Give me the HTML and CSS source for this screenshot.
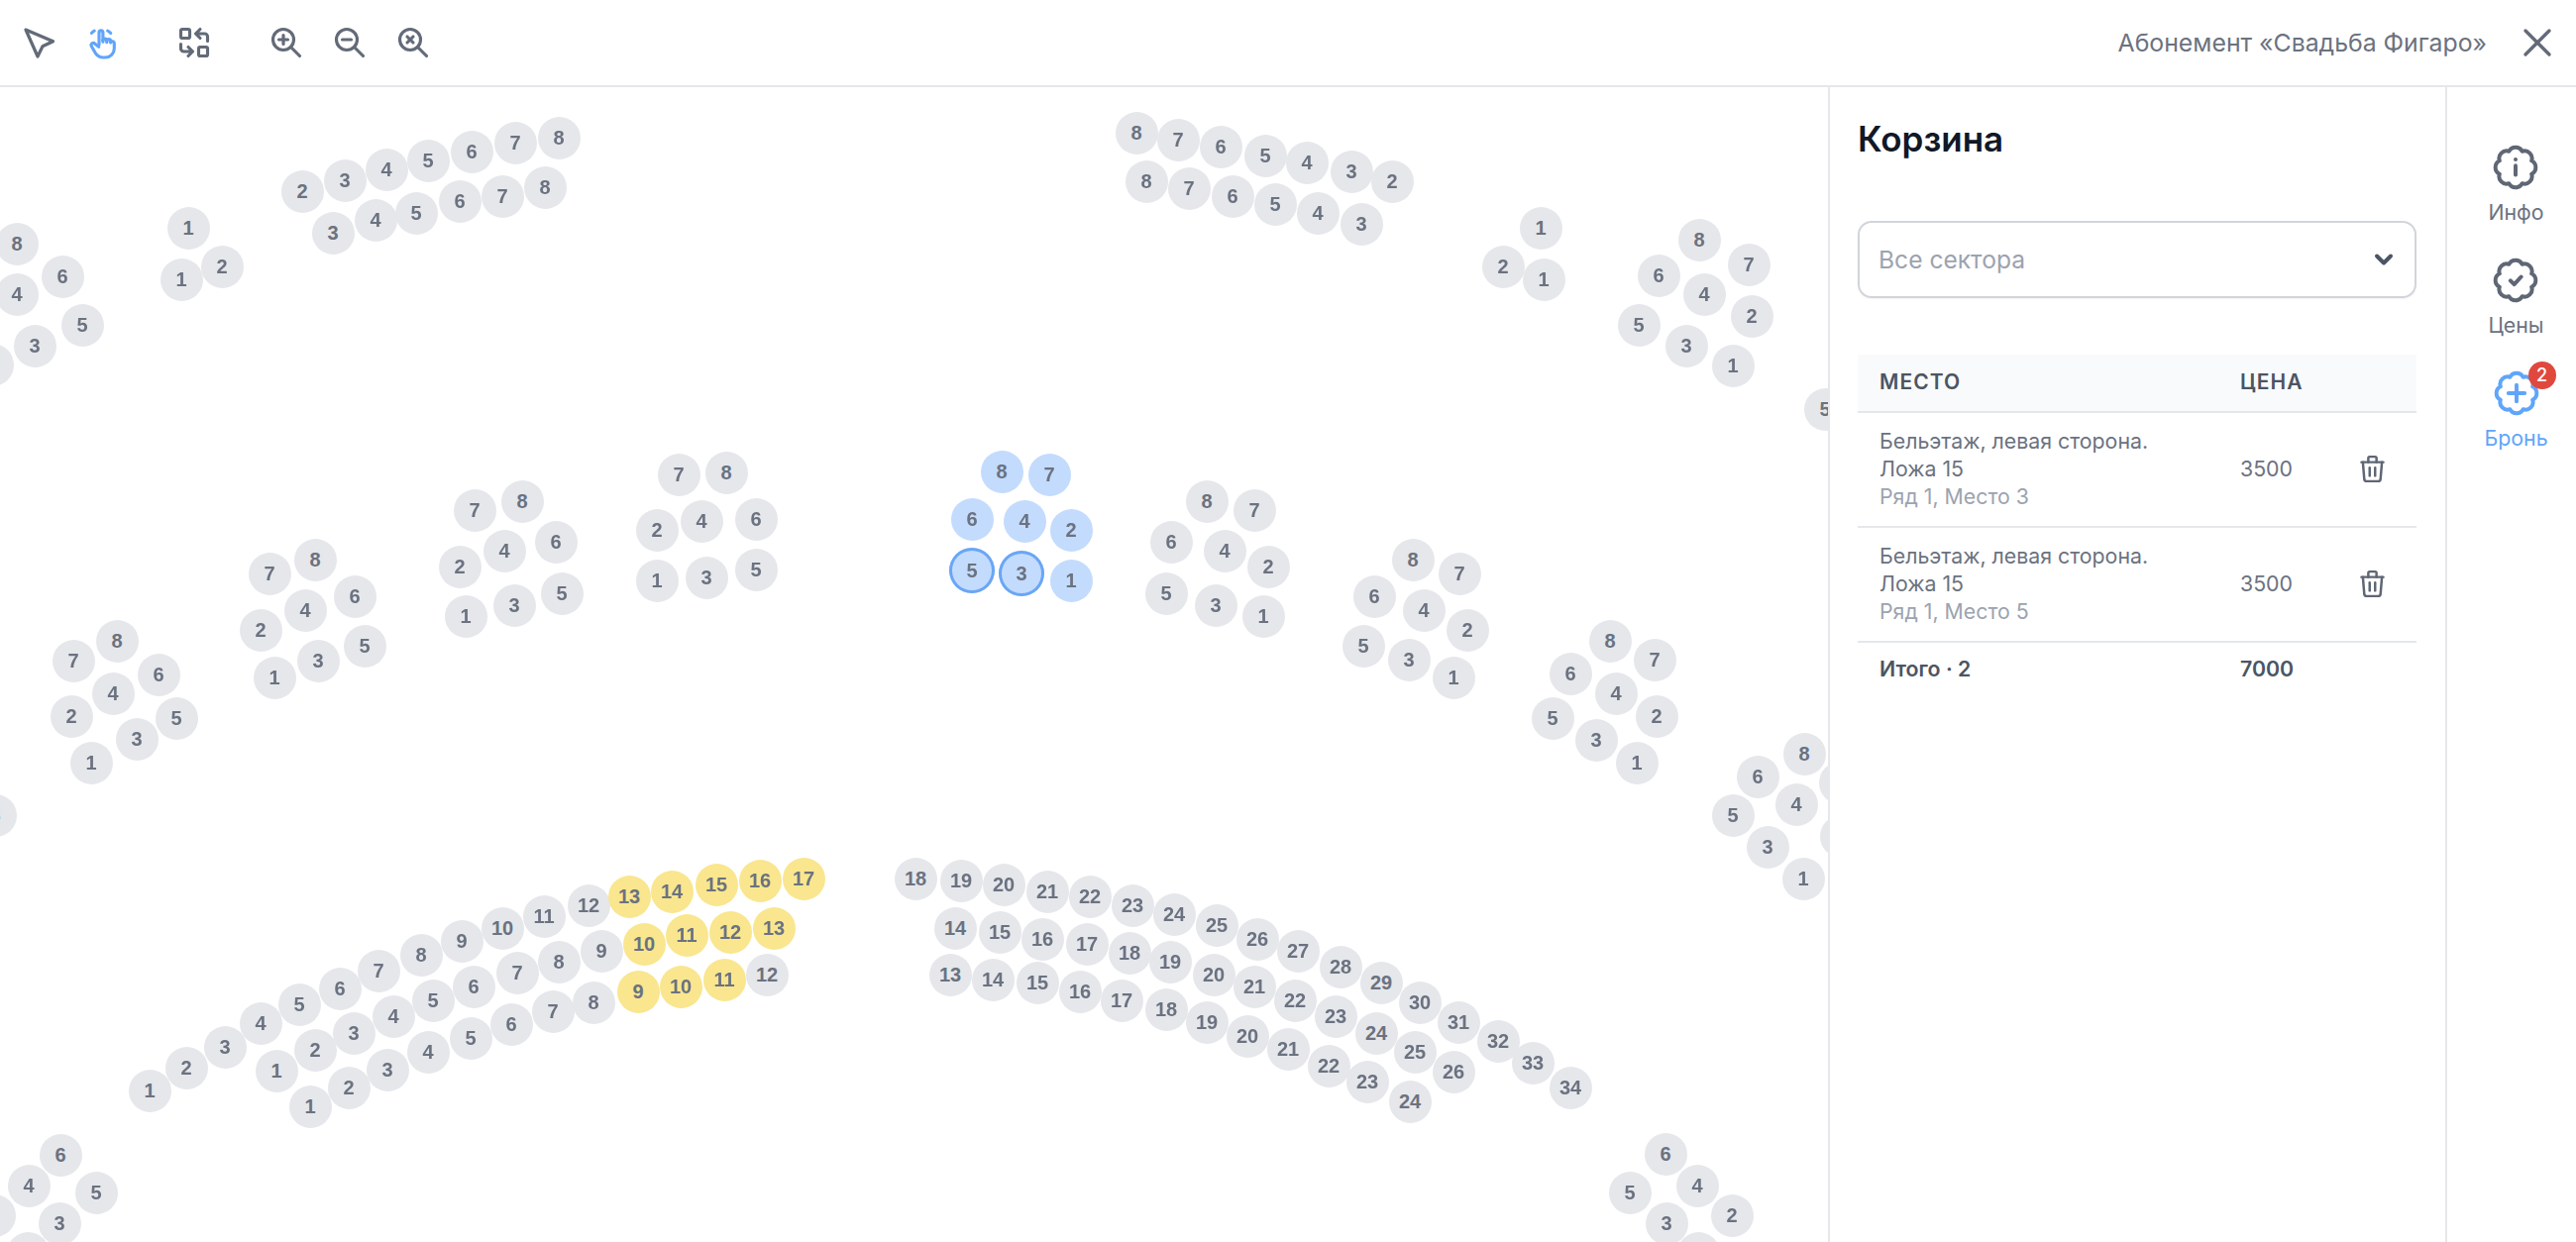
FILE: index.html
```html
<!DOCTYPE html>
<html lang="ru">
<head>
    <meta charset="UTF-8">
    <meta name="viewport" content="width=device-width, initial-scale=1.0">
    <title>Абонемент «Свадьба Фигаро»</title>
    <link rel="stylesheet" href="styles.css">
</head>
<body>
    <header class="toolbar">
        <div class="tools">
            <div class="tool-group">
                <svg class="icon cursor" viewBox="2 2 36 36"><path d="M6 7L33.6 18.7L23 23.7L18 34Z"/></svg>
                <svg class="icon active" viewBox="0 0 24 24">
                    <path d="M10 13.5V5.2a1.3 1.3 0 0 1 2.6 0v6.3"/>
                    <path d="M12.6 10.6a1.3 1.3 0 0 1 2.6 0v1.2"/>
                    <path d="M15.2 11a1.3 1.3 0 0 1 2.6 0v1"/>
                    <path d="M17.8 11.8a1.3 1.3 0 0 1 2.4 .6v3.6a6 6 0 0 1 -6 6h-1.6a6 6 0 0 1 -4.8 -2.6c-.9 -1.4 -2 -3.4 -3 -5.2a1.4 1.4 0 0 1 2.3 -1.5l2.7 2.2"/>
                    <path d="M5 5.6a5 5 0 0 1 1.8 -1.5"/>
                    <path d="M15.8 4.1a5 5 0 0 1 2 1.5"/>
                </svg>
            </div>
            <svg class="icon" viewBox="0 0 24 24">
                <rect x="3" y="3" width="6" height="6" rx="1"/>
                <rect x="15" y="15" width="6" height="6" rx="1"/>
                <path d="M21 11v-3a2 2 0 0 0 -2 -2h-6l3 3m0 -6l-3 3"/>
                <path d="M3 13v3a2 2 0 0 0 2 2h6l-3 -3m0 6l3 -3"/>
            </svg>
            <div class="tool-group zoom-group">
                <svg class="icon" viewBox="0 0 24 24"><circle cx="10" cy="10" r="7"/><path d="M7 10h6"/><path d="M10 7v6"/><path d="M21 21l-6 -6"/></svg>
                <svg class="icon" viewBox="0 0 24 24"><circle cx="10" cy="10" r="7"/><path d="M7 10h6"/><path d="M21 21l-6 -6"/></svg>
                <svg class="icon" viewBox="0 0 24 24"><circle cx="10" cy="10" r="7"/><path d="M8 8l4 4"/><path d="M12 8l-4 4"/><path d="M21 21l-6 -6"/></svg>
            </div>
        </div>
        <div class="event">
            <span class="event-title">Абонемент «Свадьба Фигаро»</span>
            <svg class="icon close" viewBox="0 0 24 24"><path d="M18 6l-12 12"/><path d="M6 6l12 12"/></svg>
        </div>
    </header>

    <main class="content">
        <div class="hall" id="hall"></div>

        <section class="cart">
            <h2 class="cart-title">Корзина</h2>
            <div class="select">
                <span>Все сектора</span>
                <svg class="chevron" viewBox="0 0 24 24"><path d="M6 9l6 6l6 -6"/></svg>
            </div>
            <table class="cart-table">
                <colgroup>
                    <col class="col-place">
                    <col class="col-price">
                    <col>
                </colgroup>
                <thead>
                    <tr>
                        <th>Место</th>
                        <th>Цена</th>
                        <th></th>
                    </tr>
                </thead>
                <tbody>
                    <tr>
                        <td>Бельэтаж, левая сторона.<br>Ложа 15<div class="seat-info">Ряд 1, Место 3</div></td>
                        <td>3500</td>
                        <td class="cell-action">
                            <svg class="trash" viewBox="0 0 24 24"><path d="M4 7h16"/><path d="M10 11v6"/><path d="M14 11v6"/><path d="M5 7l1 12a2 2 0 0 0 2 2h8a2 2 0 0 0 2 -2l1 -12"/><path d="M9 7v-3a1 1 0 0 1 1 -1h4a1 1 0 0 1 1 1v3"/></svg>
                        </td>
                    </tr>
                    <tr>
                        <td>Бельэтаж, левая сторона.<br>Ложа 15<div class="seat-info">Ряд 1, Место 5</div></td>
                        <td>3500</td>
                        <td class="cell-action">
                            <svg class="trash" viewBox="0 0 24 24"><path d="M4 7h16"/><path d="M10 11v6"/><path d="M14 11v6"/><path d="M5 7l1 12a2 2 0 0 0 2 2h8a2 2 0 0 0 2 -2l1 -12"/><path d="M9 7v-3a1 1 0 0 1 1 -1h4a1 1 0 0 1 1 1v3"/></svg>
                        </td>
                    </tr>
                    <tr class="total">
                        <td>Итого · 2</td>
                        <td>7000</td>
                        <td></td>
                    </tr>
                </tbody>
            </table>
        </section>

        <nav class="side">
            <div class="side-item">
                <svg class="rosette" viewBox="0 0 24 24">
                    <path d="M18.93 9.13A3.2 3.2 0 0 1 18.93 14.87A3.2 3.2 0 0 1 14.87 18.93A3.2 3.2 0 0 1 9.13 18.93A3.2 3.2 0 0 1 5.07 14.87A3.2 3.2 0 0 1 5.07 9.13A3.2 3.2 0 0 1 9.13 5.07A3.2 3.2 0 0 1 14.87 5.07A3.2 3.2 0 0 1 18.93 9.13Z"/>
                    <path d="M12 8.6h.01"/><path d="M12 11.2v4"/>
                </svg>
                <span>Инфо</span>
            </div>
            <div class="side-item">
                <svg class="rosette" viewBox="0 0 24 24">
                    <path d="M18.93 9.13A3.2 3.2 0 0 1 18.93 14.87A3.2 3.2 0 0 1 14.87 18.93A3.2 3.2 0 0 1 9.13 18.93A3.2 3.2 0 0 1 5.07 14.87A3.2 3.2 0 0 1 5.07 9.13A3.2 3.2 0 0 1 9.13 5.07A3.2 3.2 0 0 1 14.87 5.07A3.2 3.2 0 0 1 18.93 9.13Z"/>
                    <path d="M9.8 12.2l1.6 1.6l3 -3.3"/>
                </svg>
                <span>Цены</span>
            </div>
            <div class="side-item current">
                <div class="rosette-wrap">
                    <svg class="rosette" viewBox="0 0 24 24">
                        <path d="M18.93 9.13A3.2 3.2 0 0 1 18.93 14.87A3.2 3.2 0 0 1 14.87 18.93A3.2 3.2 0 0 1 9.13 18.93A3.2 3.2 0 0 1 5.07 14.87A3.2 3.2 0 0 1 5.07 9.13A3.2 3.2 0 0 1 9.13 5.07A3.2 3.2 0 0 1 14.87 5.07A3.2 3.2 0 0 1 18.93 9.13Z"/>
                        <path d="M12 8.5v7"/><path d="M8.5 12h7"/>
                    </svg>
                    <span class="badge">2</span>
                </div>
                <span>Бронь</span>
            </div>
        </nav>
    </main>

    <script src="seats.js"></script>
</body>
</html>
```

FILE: styles.css
```css
* {
    box-sizing: border-box;
}

body {
    margin: 0;
    height: 100vh;
    display: flex;
    flex-direction: column;
    overflow: hidden;
    background-color: white;
    font-family: Inter, "Noto Sans", sans-serif;
    font-size: 21.3px;
    line-height: 28px;
    color: #6b7280;
}

svg {
    fill: none;
    stroke: currentColor;
    stroke-linecap: round;
    stroke-linejoin: round;
}

.toolbar {
    height: 88px;
    flex-shrink: 0;
    padding: 0 15px 0 22px;
    display: flex;
    align-items: center;
    justify-content: space-between;
    border-bottom: 2px solid #e5e7eb;
}

.tools {
    display: flex;
    gap: 57px;
}

.tool-group {
    display: flex;
    gap: 27px;
}

.zoom-group {
    gap: 28px;
}

.icon {
    width: 36px;
    height: 36px;
    stroke-width: 2.1;
    color: #636a78;
    display: block;
}

.icon.cursor {
    stroke-width: 3.2;
}

.icon.active {
    color: #60a5fa;
}

.event {
    display: flex;
    align-items: center;
    gap: 27px;
}

.event-title {
    font-size: 24.8px;
}

.icon.close {
    width: 48px;
    height: 48px;
    stroke-width: 1.7;
}

.content {
    flex: 1;
    min-height: 0;
    display: flex;
}

.hall {
    flex: 1;
    min-width: 0;
    position: relative;
    overflow: hidden;
    filter: blur(0.4px);
}

.seat {
    position: absolute;
    width: 43px;
    height: 43px;
    margin: -21.5px 0 0 -21.5px;
    border-radius: 50%;
    background-color: #e5e7eb;
    display: flex;
    align-items: center;
    justify-content: center;
    font-family: "Liberation Sans", Arial, sans-serif;
    font-size: 20px;
    font-weight: bold;
    line-height: 1;
    color: #6b7280;
}

.seat.chosen {
    background-color: #c3dbfd;
}

.seat.marked {
    box-shadow: inset 0 0 0 3px #69a6f6;
    width: 46px;
    height: 46px;
    margin: -23px 0 0 -23px;
}

.seat.held {
    background-color: #f9e68e;
}

.cart {
    width: 625px;
    flex-shrink: 0;
    padding: 32px 29px 0 28px;
    border-left: 2px solid #e5e7eb;
    border-right: 2px solid #e5e7eb;
}

.cart-title {
    margin: 0 0 63px;
    font-size: 35px;
    line-height: 40px;
    font-weight: 600;
    color: #111827;
}

.select {
    height: 78px;
    padding: 0 17px 0 19px;
    display: flex;
    align-items: center;
    justify-content: space-between;
    border: 2px solid #d1d5db;
    border-radius: 14px;
    font-size: 24.6px;
    color: #9ca3af;
    box-shadow: 0 1px 2px rgba(0, 0, 0, 0.05);
}

.chevron {
    width: 28px;
    height: 28px;
    stroke-width: 3.4;
    color: #4b5563;
}

.cart-table {
    width: 100%;
    margin-top: 57px;
    border-collapse: collapse;
    table-layout: fixed;
}

.col-place {
    width: 364px;
}

.col-price {
    width: 110px;
}

.cart-table th {
    height: 58px;
    padding: 0 0 2px 22px;
    text-align: left;
    font-weight: 600;
    font-size: 21px;
    letter-spacing: 0.05em;
    text-transform: uppercase;
    color: #4b5563;
    background-color: #f9fafb;
    border-bottom: 2px solid #e5e7eb;
}

.cart-table td {
    padding: 14px 0 16px 22px;
    border-bottom: 2px solid #e5e7eb;
}

.seat-info {
    color: #9ca3af;
}

.cart-table td.cell-action {
    padding-left: 0;
}

.trash {
    width: 33px;
    height: 33px;
    stroke-width: 1.8;
    color: #5f6674;
    display: block;
    margin: 0 auto;
}

.cart-table .total td {
    padding-top: 12px;
    border-bottom: none;
    font-weight: 600;
    color: #4b5563;
}

.side {
    width: 130px;
    flex-shrink: 0;
    padding: 53px 0 0 9px;
    display: flex;
    flex-direction: column;
    align-items: center;
    gap: 27px;
}

.side-item {
    display: flex;
    flex-direction: column;
    align-items: center;
    gap: 3px;
}

.rosette {
    width: 56px;
    height: 56px;
    stroke-width: 1.7;
    color: #5f6674;
    display: block;
}

.rosette-wrap {
    position: relative;
}

.side-item.current {
    color: #60a5fa;
}

.current .rosette {
    color: #60a5fa;
}

.badge {
    position: absolute;
    left: 40px;
    top: -4px;
    width: 28px;
    height: 28px;
    border-radius: 50%;
    background-color: #e0483e;
    color: white;
    font-size: 18px;
    font-weight: 500;
    display: flex;
    align-items: center;
    justify-content: center;
}
```

FILE: seats.js
```js
// seat label, x, y (page pixels) grouped by state
const free = [
    // top left rows
    [2,305,193],[3,348,182],[4,390,171],[5,432,162],[6,476,153],[7,520,144],[8,564,139],
    [3,336,235],[4,379,222],[5,420,215],[6,464,203],[7,507,198],[8,550,189],
    [1,190,230],[2,224,269],[1,183,282],
    [8,17,246],[6,63,279],[4,17,297],[5,83,328],[3,35,349],[1,-8,368],

    // top right rows
    [8,1147,134],[7,1189,141],[6,1232,148],[5,1277,157],[4,1319,164],[3,1364,173],[2,1405,183],
    [8,1157,183],[7,1200,190],[6,1244,198],[5,1287,206],[4,1330,215],[3,1374,226],
    [1,1555,230],[2,1517,269],[1,1558,282],
    [8,1715,242],[7,1765,267],[6,1674,278],[4,1720,297],[2,1768,319],[5,1654,328],[3,1702,349],[1,1749,369],
    [5,1842,413],

    // boxes, left side
    [8,118,647],[7,74,667],[6,160,681],[4,114,700],[2,72,723],[5,178,725],[3,138,746],[1,92,770],
    [8,318,565],[7,272,579],[6,358,602],[4,308,616],[2,263,636],[5,368,652],[3,321,667],[1,277,684],
    [8,527,506],[7,479,515],[6,561,547],[4,509,556],[2,464,572],[5,567,599],[3,519,611],[1,470,622],
    [8,733,477],[7,685,479],[6,763,524],[4,708,526],[2,663,535],[5,763,575],[3,713,583],[1,663,586],
    [8,-5,823],

    // boxes, right side
    [8,1218,506],[7,1266,515],[6,1182,547],[4,1236,556],[2,1280,572],[5,1177,599],[3,1227,611],[1,1275,622],
    [8,1426,565],[7,1473,579],[6,1387,602],[4,1437,616],[2,1481,636],[5,1376,652],[3,1422,666],[1,1467,684],
    [8,1625,647],[7,1670,666],[6,1585,680],[4,1631,700],[2,1672,723],[5,1567,725],[3,1611,747],[1,1652,770],
    [8,1821,761],[7,1857,790],[6,1774,784],[4,1813,812],[2,1858,844],[5,1749,823],[3,1784,855],[1,1820,887],

    // balcony left
    [1,151,1101],[2,188,1078],[3,227,1057],[4,263,1033],[5,302,1014],[6,343,998],[7,382,980],[8,425,964],[9,466,950],[10,507,937],[11,549,925],[12,594,914],
    [1,279,1081],[2,318,1060],[3,357,1043],[4,397,1026],[5,437,1010],[6,478,996],[7,522,982],[8,564,971],[9,607,960],
    [1,313,1117],[2,352,1098],[3,391,1080],[4,432,1062],[5,475,1048],[6,516,1034],[7,558,1021],[8,599,1012],[12,774,984],

    // balcony right
    [18,924,887],[19,970,889],[20,1013,893],[21,1057,900],[22,1100,905],[23,1143,914],[24,1185,923],[25,1228,934],[26,1269,948],[27,1310,960],[28,1353,976],[29,1394,992],[30,1433,1012],[31,1472,1032],[32,1512,1051],[33,1547,1073],[34,1585,1098],
    [14,964,937],[15,1009,941],[16,1052,948],[17,1097,953],[18,1140,962],[19,1181,971],[20,1225,984],[21,1266,996],[22,1307,1010],[23,1348,1026],[24,1389,1043],[25,1428,1062],[26,1467,1082],
    [13,959,984],[14,1002,989],[15,1047,992],[16,1090,1001],[17,1132,1010],[18,1177,1019],[19,1218,1032],[20,1259,1046],[21,1300,1059],[22,1341,1076],[23,1380,1092],[24,1423,1112],

    // bottom corners
    [6,61,1166],[4,29,1197],[5,97,1204],[2,-6,1227],[3,60,1235],[1,28,1265],
    [6,1681,1165],[4,1713,1197],[5,1645,1204],[2,1748,1227],[3,1682,1235],[1,1714,1265]
];

const held = [
    [13,635,905],[14,678,900],[15,723,893],[16,767,889],[17,811,887],
    [10,650,953],[11,693,944],[12,737,941],[13,781,937],
    [9,644,1001],[10,687,996],[11,731,989]
];

const chosen = [
    [8,1011,476],[7,1059,479],[6,981,524],[4,1034,526],[2,1081,535],[1,1081,586]
];

const marked = [
    [5,981,576],[3,1031,579]
];

const hall = document.getElementById('hall');
const hallTop = 88;

function addSeats(list, className) {
    list.forEach(function(item) {
        const seat = document.createElement('div');
        seat.className = className;
        seat.textContent = item[0];
        seat.style.left = item[1] + 'px';
        seat.style.top = (item[2] - hallTop) + 'px';
        hall.appendChild(seat);
    });
}

addSeats(free, 'seat');
addSeats(held, 'seat held');
addSeats(chosen, 'seat chosen');
addSeats(marked, 'seat chosen marked');
```
